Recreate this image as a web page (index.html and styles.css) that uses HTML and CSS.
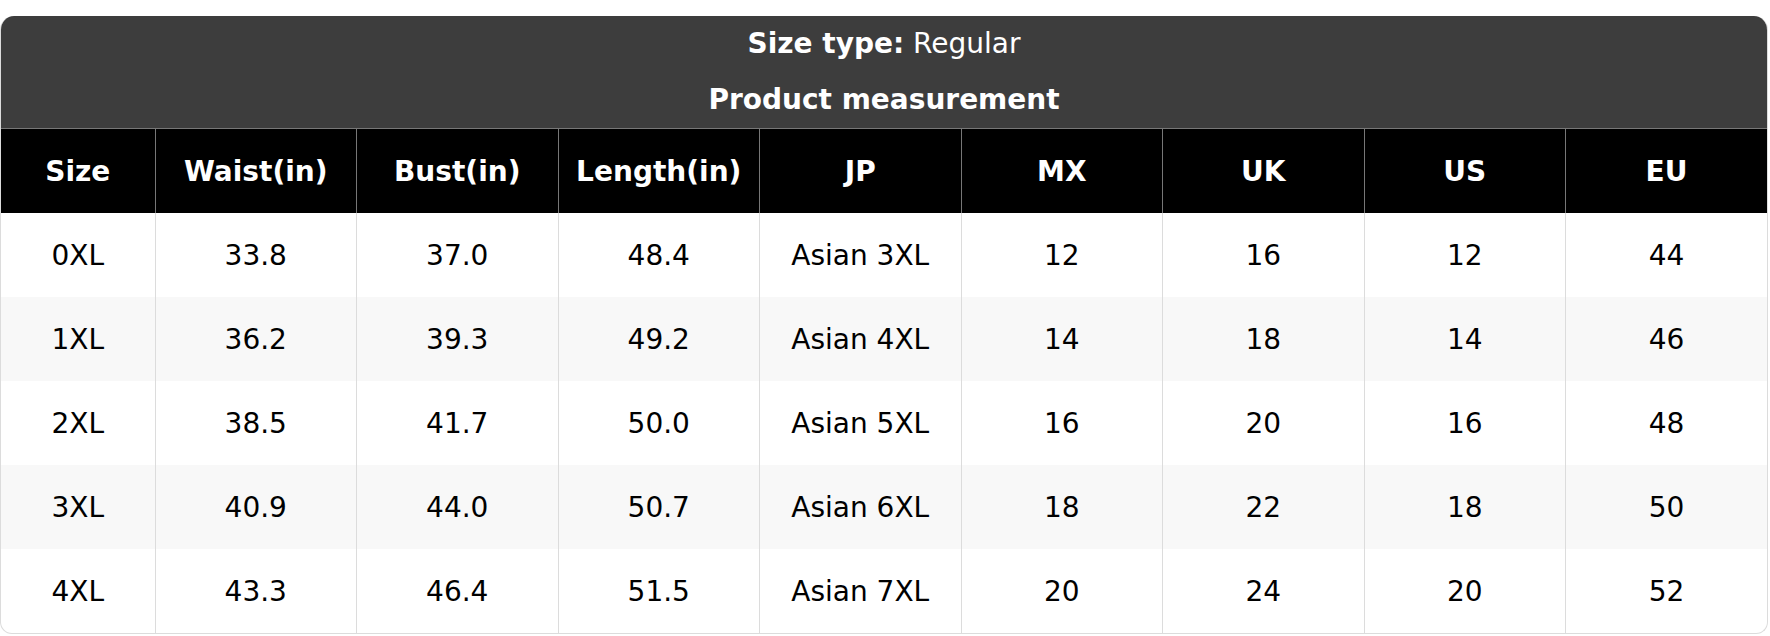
FILE: index.html
```html
<!DOCTYPE html>
<html lang="en">
<head>
<meta charset="utf-8">
<title>Size chart</title>
<link rel="stylesheet" href="styles.css">
</head>
<body>
<div class="chart">
  <div class="chart-head">
    <div class="head-line"><b>Size type:</b> Regular</div>
    <div class="head-line head-title">Product measurement</div>
  </div>
  <table class="size-table">
    <colgroup>
      <col class="col-size">
      <col><col><col><col><col><col><col><col>
    </colgroup>
    <thead>
      <tr>
        <th>Size</th><th>Waist(in)</th><th>Bust(in)</th><th>Length(in)</th><th>JP</th><th>MX</th><th>UK</th><th>US</th><th>EU</th>
      </tr>
    </thead>
    <tbody>
      <tr><td>0XL</td><td>33.8</td><td>37.0</td><td>48.4</td><td>Asian 3XL</td><td>12</td><td>16</td><td>12</td><td>44</td></tr>
      <tr><td>1XL</td><td>36.2</td><td>39.3</td><td>49.2</td><td>Asian 4XL</td><td>14</td><td>18</td><td>14</td><td>46</td></tr>
      <tr><td>2XL</td><td>38.5</td><td>41.7</td><td>50.0</td><td>Asian 5XL</td><td>16</td><td>20</td><td>16</td><td>48</td></tr>
      <tr><td>3XL</td><td>40.9</td><td>44.0</td><td>50.7</td><td>Asian 6XL</td><td>18</td><td>22</td><td>18</td><td>50</td></tr>
      <tr><td>4XL</td><td>43.3</td><td>46.4</td><td>51.5</td><td>Asian 7XL</td><td>20</td><td>24</td><td>20</td><td>52</td></tr>
    </tbody>
  </table>
</div>
</body>
</html>
```

FILE: styles.css
```css
html, body {
  margin: 0;
  padding: 0;
  background: #ffffff;
}

body {
  padding-top: 16px;
  font-family: "DejaVu Sans", "Liberation Sans", sans-serif;
  color: #000000;
}

.chart {
  box-sizing: border-box;
  width: 1768px;
  border: 1px solid #dcdcdc;
  border-top: none;
  border-radius: 14px 14px 12px 12px;
  overflow: hidden;
  background: #ffffff;
}

.chart-head {
  background: #3d3d3d;
  color: #ffffff;
  text-align: center;
  padding-top: 0;
}

.head-line {
  height: 56px;
  line-height: 56px;
  font-size: 28px;
}

.head-title {
  font-weight: bold;
}

.size-table {
  width: 100%;
  border-collapse: collapse;
  table-layout: fixed;
}

.col-size {
  width: 154px;
}

.size-table th {
  background: #000000;
  color: #ffffff;
  font-weight: bold;
  font-size: 28px;
  height: 84px;
  padding: 0;
  text-align: center;
  border-top: 1px solid #777777;
  border-left: 1px solid #777777;
}

.size-table th:first-child {
  border-left: none;
}

.size-table td {
  font-size: 28px;
  height: 84px;
  padding: 0;
  text-align: center;
  border-left: 1px solid #dcdcdc;
}

.size-table td:first-child {
  border-left: none;
}

.size-table tbody tr:nth-child(even) td {
  background: #f8f8f8;
}
```
